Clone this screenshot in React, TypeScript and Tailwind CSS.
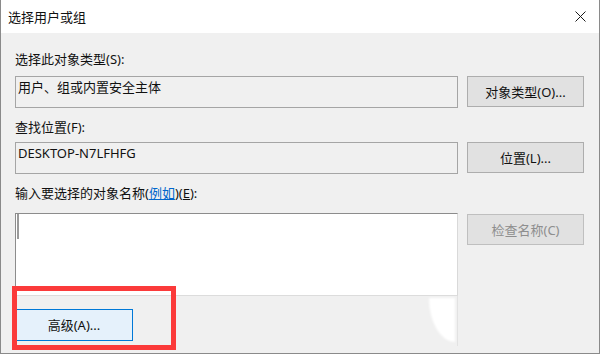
const font = "font-['Noto_Sans','Noto_Sans_CJK_SC',sans-serif]"

function Button({ label, className = '' }: { label: string; className?: string }) {
  return (
    <div
      className={`flex h-[31px] w-[117px] shrink-0 items-center justify-center border border-[#adadad] bg-[#e1e1e1] leading-[18px] ${className}`}
    >
      {label}
    </div>
  )
}

export default function App() {
  return (
    <div
      className={`relative h-[354px] w-[600px] overflow-hidden border-x border-b border-[#8a8a8a] bg-[#f0f0f0] text-[13px] text-[#111] ${font}`}
    >
      {/* title bar */}
      <div className="flex h-[33px] items-center bg-white pl-[7px]">
        <span className="leading-[18px]">选择用户或组</span>
        <svg className="ml-auto mr-[13px]" width="11" height="11" viewBox="0 0 11 11">
          <path d="M0.5 0.5L10.5 10.5M10.5 0.5L0.5 10.5" stroke="#1a1a1a" strokeWidth="1" />
        </svg>
      </div>

      <div className="pl-[14px] pr-[15px]">
        <div className="mt-[17px] h-[18px] leading-[18px]">选择此对象类型(S):</div>
        <div className="mt-[8px] flex items-start gap-[9px]">
          <div className="h-[32px] w-[443px] border border-[#a5a5a5] px-[2px] pt-[1px] leading-[18px]">
            用户、组或内置安全主体
          </div>
          <Button label="对象类型(O)..." />
        </div>

        <div className="mt-[10px] h-[18px] leading-[18px]">查找位置(F):</div>
        <div className="mt-[6px] flex items-start gap-[9px]">
          <div className="h-[32px] w-[443px] border border-[#a5a5a5] px-[2px] pt-[1px] leading-[18px]">
            DESKTOP-N7LFHFG
          </div>
          <Button label="位置(L)..." />
        </div>

        <div className="mt-[10px] h-[18px] leading-[18px]">
          输入要选择的对象名称(<span className="text-[#0066cc] underline">例如</span>)(<span className="underline">E</span>):
        </div>
        <div className="mt-[11px] flex items-start gap-[9px]">
          <div className="h-[83px] w-[443px] border border-t-[#8c8c8c] border-l-[#8c8c8c] border-r-[#d9d9d9] border-b-[#dcdcdc] bg-white">
            <div className="ml-[1px] h-[25px] w-[2px] bg-[#9a9a9a]" />
          </div>
          <Button
            label="检查名称(C)"
            className="mt-[1px] border-[#bfbfbf] bg-[#cccccc] text-[#8e8e8e]"
          />
        </div>

        <div className="mt-[13px] flex h-[32px] w-[118px] items-center justify-center border border-[#0078d7] bg-[#e5f1fb] leading-[18px]">
          高级(A)...
        </div>
      </div>

      {/* image edit artifacts */}
      <div className="absolute left-[456px] top-[296px] h-[50px] w-[1px] bg-[#e2e2e2]" />
      <div className="absolute left-[428px] top-[298px] h-[44px] w-[26px] rounded-bl-[100%] bg-white blur-[1px]" />

      {/* red highlight */}
      <div className="absolute left-[11px] top-[286px] h-[64px] w-[164px] border-[5px] border-[#fb3a3a]" />
    </div>
  )
}
